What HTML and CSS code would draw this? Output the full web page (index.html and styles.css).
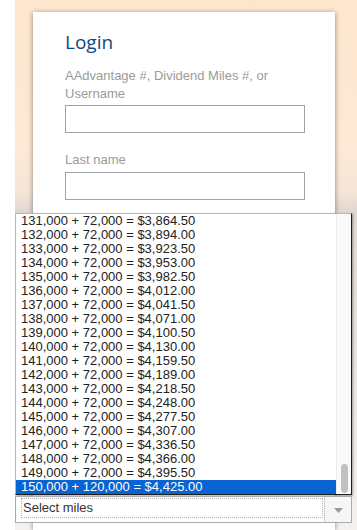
FILE: index.html
```html
<!DOCTYPE html>
<html lang="en">
<head>
    <meta charset="UTF-8">
    <meta name="viewport" content="width=device-width, initial-scale=1.0">
    <title>Login - Buy Miles</title>
    <link rel="stylesheet" href="styles.css">
</head>
<body>
    <div class="page">
        <div class="hero">
            <div class="login-card">
                <h1>Login</h1>
                <label class="field-label" for="username">AAdvantage #, Dividend Miles #, or Username</label>
                <input class="field-input" type="text" id="username">
                <label class="field-label field-gap" for="lastname">Last name</label>
                <input class="field-input" type="text" id="lastname">
            </div>

            <div class="miles-picker">
                <div class="miles-menu">
                    <ul class="miles-options">
                        <li>131,000 + 72,000 = $3,864.50</li>
                        <li>132,000 + 72,000 = $3,894.00</li>
                        <li>133,000 + 72,000 = $3,923.50</li>
                        <li>134,000 + 72,000 = $3,953.00</li>
                        <li>135,000 + 72,000 = $3,982.50</li>
                        <li>136,000 + 72,000 = $4,012.00</li>
                        <li>137,000 + 72,000 = $4,041.50</li>
                        <li>138,000 + 72,000 = $4,071.00</li>
                        <li>139,000 + 72,000 = $4,100.50</li>
                        <li>140,000 + 72,000 = $4,130.00</li>
                        <li>141,000 + 72,000 = $4,159.50</li>
                        <li>142,000 + 72,000 = $4,189.00</li>
                        <li>143,000 + 72,000 = $4,218.50</li>
                        <li>144,000 + 72,000 = $4,248.00</li>
                        <li>145,000 + 72,000 = $4,277.50</li>
                        <li>146,000 + 72,000 = $4,307.00</li>
                        <li>147,000 + 72,000 = $4,336.50</li>
                        <li>148,000 + 72,000 = $4,366.00</li>
                        <li>149,000 + 72,000 = $4,395.50</li>
                        <li class="selected">150,000 + 120,000 = $4,425.00</li>
                    </ul>
                    <div class="menu-scroll">
                        <div class="menu-thumb"></div>
                    </div>
                </div>
                <div class="miles-select">
                    <span class="select-value">Select miles</span>
                    <span class="select-arrow">
                        <svg width="9" height="5" viewBox="0 0 9 5"><path d="M0 0 H9 L4.5 5 Z" fill="#9a9a9a"/></svg>
                    </span>
                </div>
            </div>
        </div>
    </div>
</body>
</html>
```

FILE: styles.css
```css
body {
    margin: 0;
    background: #fff;
    font-family: "Liberation Sans", Arial, sans-serif;
    overflow: hidden;
}
.page {
    height: 530px;
    padding-left: 15px;
}
.hero {
    height: 530px;
    overflow: hidden;
    display: grid;
    grid-template-rows: 530px;
    background: linear-gradient(180deg, #fee6cd 0%, #fde9d5 28%, #f6e6d9 36%, #dfd7d0 40%, #e6e1dc 60%, #f4f2f0 100%);
}
.login-card {
    grid-area: 1 / 1;
    margin: 12px 22px 0 18px;
    padding: 18px 30px 0 32px;
    background: #fff;
    box-shadow: 0 1px 5px rgba(0,0,0,0.45);
    display: flex;
    flex-direction: column;
    align-items: flex-start;
}
.login-card h1 {
    margin: 0 0 13px;
    font-family: "Open Sans", sans-serif;
    font-size: 19px;
    font-weight: normal;
    line-height: 24px;
    color: #0d4785;
}
.field-label {
    width: 240px;
    font-size: 13px;
    line-height: 17.5px;
    color: #9b9b9b;
    margin-bottom: 3px;
}
.field-gap {
    margin-top: 18px;
}
.field-input {
    box-sizing: border-box;
    width: 240px;
    height: 28px;
    margin: 0;
    border: 1px solid #9ea3a8;
    border-radius: 0;
    background: #fff;
}
.miles-picker {
    grid-area: 1 / 1;
    align-self: end;
    margin: 0 5px 7px 0;
    display: flex;
    flex-direction: column;
    gap: 1px;
    font-size: 13px;
}
.miles-menu {
    display: flex;
    background: #fff;
    border: 1px solid #b8b8b8;
    border-right-color: #1c1c1c;
    border-bottom-color: #1c1c1c;
    box-shadow: 1px 1px 2px rgba(0,0,0,0.35);
}
.miles-options {
    flex: 1;
    margin: 0;
    padding: 0;
    list-style: none;
}
.miles-options li {
    height: 14px;
    line-height: 14px;
    padding-left: 5px;
    color: #222;
    white-space: nowrap;
}
.miles-options li.selected {
    background: #0863d3;
    color: #fff;
}
.menu-scroll {
    width: 14px;
    background: #fafafa;
    border-left: 1px solid #ececec;
    display: flex;
    flex-direction: column;
    justify-content: flex-end;
    align-items: center;
    padding-bottom: 1px;
}
.menu-thumb {
    width: 7px;
    height: 29px;
    border-radius: 4px;
    background: #c1c1c1;
}
.miles-select {
    box-sizing: border-box;
    height: 27px;
    display: flex;
    background: #fff;
    border: 1px solid #a9acaf;
}
.select-value {
    flex: 1;
    margin: 2px 2px 5px 6px;
    padding-left: 1px;
    line-height: 18px;
    color: #333;
    outline: 1px dotted #b5b5b5;
    outline-offset: 0;
}
.select-arrow {
    width: 26px;
    border-left: 1px solid #d2d2d2;
    background: #f6f6f6;
    display: flex;
    align-items: center;
    justify-content: center;
    padding-top: 2px;
}
```
